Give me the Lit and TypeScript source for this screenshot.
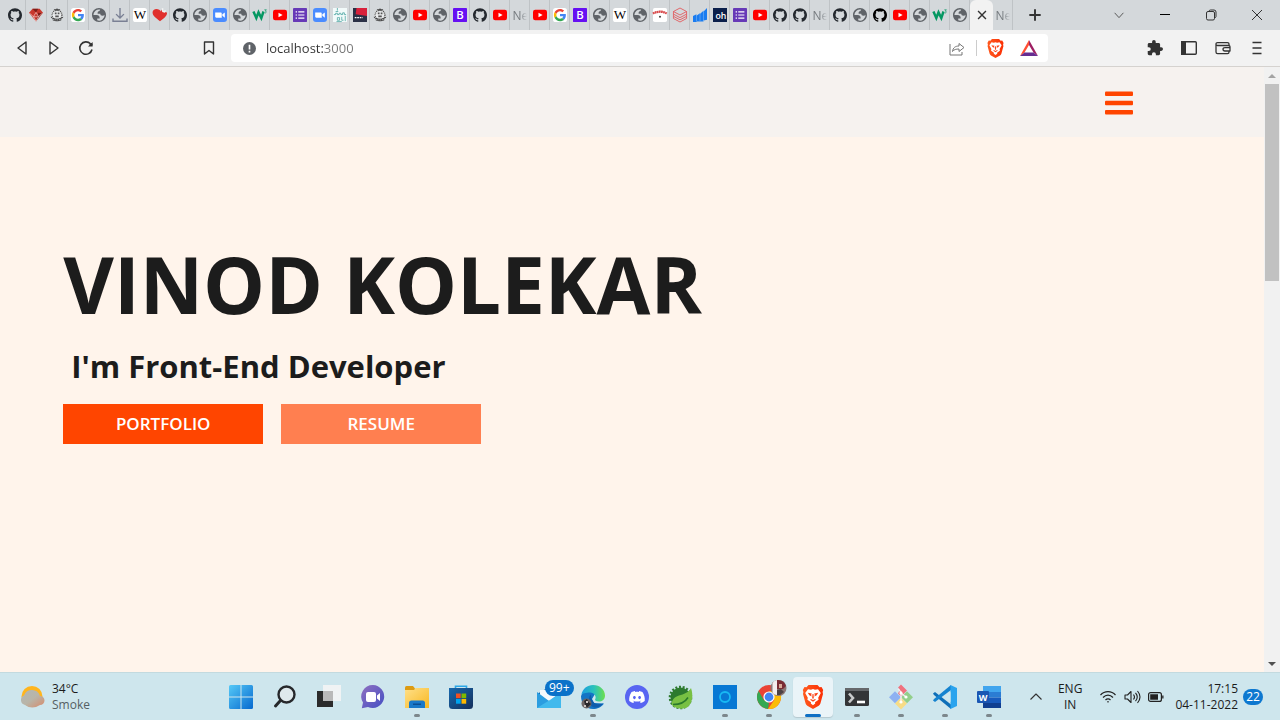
import { LitElement, html, svg, css } from "lit";
import { customElement } from "lit/decorators.js";
import { classMap } from "lit/directives/class-map.js";

const GITHUB =
  "M12 .297c-6.63 0-12 5.373-12 12 0 5.303 3.438 9.8 8.205 11.385.6.113.82-.258.82-.577 0-.285-.01-1.04-.015-2.04-3.338.724-4.042-1.61-4.042-1.61C4.422 18.07 3.633 17.7 3.633 17.7c-1.087-.744.084-.729.084-.729 1.205.084 1.838 1.236 1.838 1.236 1.07 1.835 2.809 1.305 3.495.998.108-.776.417-1.305.76-1.605-2.665-.3-5.466-1.332-5.466-5.93 0-1.31.465-2.38 1.235-3.22-.135-.303-.54-1.523.105-3.176 0 0 1.005-.322 3.3 1.23.96-.267 1.98-.399 3-.405 1.02.006 2.04.138 3 .405 2.28-1.552 3.285-1.23 3.285-1.23.645 1.653.24 2.873.12 3.176.765.84 1.23 1.91 1.23 3.22 0 4.61-2.805 5.625-5.475 5.92.42.36.81 1.096.81 2.22 0 1.606-.015 2.896-.015 3.286 0 .315.21.69.825.57C20.565 22.092 24 17.592 24 12.297c0-6.627-5.373-12-12-12";
const GLOBE =
  "M12 2C6.48 2 2 6.48 2 12s4.48 10 10 10 10-4.48 10-10S17.52 2 12 2zM4 12h4.400c3.407.022 4.922 1.730 4.543 5.127H9.488v2.470a8.004 8.004 0 0 0 10.498-8.083C19.327 12.504 18.332 13 17 13c-2.137 0-3.206-.916-3.206-2.750h-3.748c-.274-2.728.683-4.092 2.870-4.092 0-.975.327-1.597.811-1.970A8.004 8.004 0 0 0 4 12z";
const DISCORD =
  "M20.317 4.3698a19.7913 19.7913 0 00-4.8851-1.5152.0741.0741 0 00-.0785.0371c-.211.3753-.4447.8648-.6083 1.2495-1.8447-.2762-3.68-.2762-5.4868 0-.1636-.3933-.4058-.8742-.6177-1.2495a.077.077 0 00-.0785-.037 19.7363 19.7363 0 00-4.8852 1.515.0699.0699 0 00-.0321.0277C.5334 9.0458-.319 13.5799.0992 18.0578a.0824.0824 0 00.0312.0561c2.0528 1.5076 4.0413 2.4228 5.9929 3.0294a.0777.0777 0 00.0842-.0276c.4616-.6304.8731-1.2952 1.226-1.9942a.076.076 0 00-.0416-.1057c-.6528-.2476-1.2743-.5495-1.8722-.8923a.077.077 0 01-.0076-.1277c.1258-.0943.2517-.1923.3718-.2914a.0743.0743 0 01.0776-.0105c3.9278 1.7933 8.18 1.7933 12.0614 0a.0739.0739 0 01.0785.0095c.1202.099.246.1981.3728.2924a.077.077 0 01-.0066.1276 12.2986 12.2986 0 01-1.873.8914.0766.0766 0 00-.0407.1067c.3604.698.7719 1.3628 1.225 1.9932a.076.076 0 00.0842.0286c1.961-.6067 3.9495-1.5219 6.0023-3.0294a.077.077 0 00.0313-.0552c.5004-5.177-.8382-9.6739-3.5485-13.6604a.061.061 0 00-.0312-.0286zM8.02 15.3312c-1.1825 0-2.1569-1.0857-2.1569-2.419 0-1.3332.9555-2.4189 2.157-2.4189 1.2108 0 2.1757 1.0952 2.1568 2.419 0 1.3332-.9555 2.4189-2.1569 2.4189zm7.9748 0c-1.1825 0-2.1569-1.0857-2.1569-2.419 0-1.3332.9554-2.4189 2.1569-2.4189 1.2108 0 2.1757 1.0952 2.1568 2.419 0 1.3332-.946 2.4189-2.1568 2.4189Z";

/* Favicons, all on a 16 x 16 grid. */
const favicons: Record<string, unknown> = {
  github: svg`<path transform="scale(.6667)" fill="#24292f" d=${GITHUB} />`,
  githubBlack: svg`<path transform="scale(.6667)" fill="#000" d=${GITHUB} />`,
  globe: svg`<path transform="translate(-1.600 -1.600) scale(.8)" fill-rule="evenodd" fill="#5f6368" d=${GLOBE} />`,
  ruby: svg`
    <path fill="#c8372d" d="M4 .8h8.200L16 5.400 8 15.500 0 5.400z" />
    <path fill="#5d1210" d="M8 5l2.500-4.200H4z M10.500 5.500L15 6 8 15z" opacity=".7" />
    <path fill="none" stroke="#f3c9c4" stroke-width=".8" d="M1 6l4 4 3-5 3 5 4-4M5 10l3 5 3-5z" />`,
  emblem: svg`
    <circle cx="8" cy="8" r="6.500" fill="#e9ebec" />
    <circle cx="8" cy="8" r="5.600" fill="none" stroke="#555" stroke-width="1.600" stroke-dasharray="1.200 .9" />
    <path fill="none" stroke="#333" stroke-width="1" d="M1 10.500c4 3 10 3 14 0M3 13.500c3 1.500 7 1.500 10 0M8 .5v3M4.500 2l7 0" />
    <path fill="#555" d="M5.500 5h2v2h-2zM8.800 5h2v2h-2zM6 8.500h4v2H6z" />`,
  google: svg`
    <rect width="16" height="16" rx="3" fill="#fff" />
    <g transform="translate(1 1) scale(.2917)">
      <path fill="#EA4335" d="M24 9.500c3.540 0 6.710 1.220 9.210 3.600l6.850-6.850C35.900 2.380 30.470 0 24 0 14.620 0 6.510 5.380 2.560 13.220l7.980 6.190C12.430 13.720 17.740 9.500 24 9.500z" />
      <path fill="#4285F4" d="M46.980 24.550c0-1.570-.15-3.090-.38-4.550H24v9.020h12.940c-.58 2.960-2.260 5.480-4.780 7.180l7.730 6c4.510-4.180 7.090-10.360 7.090-17.650z" />
      <path fill="#FBBC05" d="M10.530 28.590c-.48-1.450-.76-2.990-.76-4.590s.27-3.140.76-4.590l-7.980-6.190C.92 16.460 0 20.120 0 24c0 3.880.92 7.540 2.560 10.780l7.970-6.190z" />
      <path fill="#34A853" d="M24 48c6.480 0 11.930-2.130 15.890-5.810l-7.730-6c-2.150 1.450-4.920 2.300-8.160 2.300-6.260 0-11.570-4.220-13.470-9.910l-7.980 6.190C6.510 42.620 14.620 48 24 48z" />
    </g>`,
  download: svg`<path fill="none" stroke="#7a8094" stroke-width="1.600" d="M8 0v11M3.500 7l4.500 4.500L12.500 7M0 12v3.200h16V12" />`,
  wiki: svg`<rect width="16" height="16" rx="3" fill="#fff" /><text x="8" y="13" text-anchor="middle" class="serif">W</text>`,
  heart: svg`
    <path fill="#e0302d" d="M8 15C3 11.500-.5 8.500-.5 5.200-.5 2.500 1.500 1 4 1 6 1 8.500 2 9 4l1-2 3 2.500 3 .5c.5 4-4 7-8 10z" />
    <path fill="#f4f4f4" d="M10 0l2 .5-.5 2.500L15 2.500l-1.500 3-3-1z" />`,
  zoom: svg`
    <rect width="16" height="16" rx="3.500" fill="#4a8cff" />
    <path fill="#fff" d="M2.500 5h6.200c.8 0 1.300.5 1.300 1.300V11H3.800c-.8 0-1.300-.5-1.300-1.300zM10.700 7.200L13.500 5v6l-2.800-2.200z" />`,
  w3: svg`
    <path fill="none" stroke="#059862" stroke-width="2.800" d="M.5 4l3.300 7.500L6.300 5l3.200 6.500L12 4" />
    <path fill="none" stroke="#059862" stroke-width=".8" d="M13 2h2.300l-1.300 1.500c1.800 0 1.500 2.500-.6 2.200" />`,
  youtube: svg`<rect y="2" width="16" height="12" rx="2.500" fill="#f00" /><path fill="#fff" d="M6.300 5.300v5.400L11 8z" />`,
  forms: svg`
    <rect width="16" height="16" rx="1" fill="#673ab7" />
    <path stroke="#fff" stroke-width="1.400" d="M6 4.500h7M6 8h7M6 11.500h7M3 4.500h1.600M3 8h1.600M3 11.500h1.600" />`,
  teal: svg`
    <rect width="16" height="16" fill="#f2fafa" />
    <path fill="none" stroke="#3a9c98" stroke-width=".8" d="M5 0v3M3 4h3M1 7.500h2V6h2v1.500h2V6h2v1.500h2V5.500h2v2h2M5 11h2.500v3H5v-3M10 10v4h2M14 9v6M4 15.500h6" />`,
  news: svg`
    <rect width="16" height="16" fill="#2a3046" />
    <path fill="#d8213b" d="M4 0h12v9L3 7z" />
    <path stroke="#fff" stroke-width="1.200" stroke-dasharray="2 .8" d="M2 11h9" />`,
  bootstrap: svg`<rect width="16" height="16" rx="1" fill="#6610f2" /><text x="8" y="13" text-anchor="middle" class="letter">B</text>`,
  arc: svg`
    <rect width="16" height="16" rx="2" fill="#fff" />
    <path fill="none" stroke="#d8484a" stroke-width="2.600" stroke-dasharray="2 .4" d="M0 6.500c4-3 12-3 16 0" />
    <circle cx="8" cy="10" r="1.200" fill="#444" />`,
  stack: svg`
    <path fill="none" stroke="#e2585c" stroke-width="1" d="M8 0l7.500 4L8 8 .5 4zM.5 4v3L8 11l7.500-4V4M.5 7v2.500l7.500 4 7.500-4V7M.5 9.500V12L8 16l7.500-4V9.500" />`,
  bars: svg`<path fill="#1a7cf0" d="M0 9l4-2v9H0zM3.500 9l4.500-3v9.500H3.500zM7.500 7l4.500-4v12.500H7.500zM11 5l5-5v13.500l-5 1z" /><path fill="none" stroke="#9cc8f5" stroke-width=".5" d="M4 7v8M8 6v9M12 3v12" />`,
  oh: svg`<rect width="16" height="16" fill="#0b1f4b" /><text x="9" y="12" text-anchor="middle" class="tiny">oh</text>`,
};

const tabs =
  "github ruby emblem google globe download wiki heart github globe zoom globe w3 youtube forms zoom teal news emblem globe youtube globe bootstrap github youtube Ne youtube google bootstrap globe wiki globe arc stack bars oh forms youtube github github Ne github globe githubBlack youtube globe w3 globe active Ne".split(
    " "
  );

const line = (d: string, size = 16, w = 1.4, color = "#333") => html`
  <svg width=${size} height=${size} viewBox="0 0 16 16" fill="none" stroke=${color} stroke-width=${w} stroke-linejoin="round" aria-hidden="true">
    <path d=${d} />
  </svg>`;

const lion = (w: number, h: number) => html`
  <svg width=${w} height=${h} viewBox="0 0 20 24" aria-hidden="true">
    <defs><linearGradient id="lion"><stop stop-color="#ff5a1f" /><stop offset="1" stop-color="#fb2f04" /></linearGradient></defs>
    <path fill="url(#lion)" d="M5.500 0h9l2 2.200 2-.2 1.700 3-.6 2 .4 2-2.600 9.500c-.3 1-1 1.700-1.700 2.200L10 24l-5.700-3.300c-.7-.5-1.400-1.200-1.700-2.200L0 9l.4-2L-.2 5l1.700-3 2 .2z" />
    <path fill="#fff" d="M5 4.200l3 .5 2-.6 2 .6 3-.5L17.800 8l-2.600 4.700.4 2-3.600 2.600.2 1.200L10 20.300l-2.200-1.800.2-1.200-3.600-2.600.4-2L2.200 8z" />
    <path fill="#fb4318" d="M4.800 7.800l4 .6-.6 1.400.4 1.700-2.300-1.300zM15.200 7.800l-4 .6.6 1.400-.4 1.700 2.300-1.300zM9.500 9h1l.3 4L10 14l-.8-1zM6.800 14.600l2-.3 1.200.9 1.200-.9 2 .3L10 16.800z" />
  </svg>`;

/* Taskbar artwork, on a 24 x 24 grid. */
const apps: { name: string; art?: unknown; run?: boolean; active?: boolean; badge?: string }[] = [
  {
    name: "Start",
    art: svg`
      <linearGradient id="win" x2="1" y2="1"><stop stop-color="#55c9f7" /><stop offset="1" stop-color="#0669cf" /></linearGradient>
      <path fill="url(#win)" d="M1.500 0H11.500V11.500H0V1.500A1.500 1.500 0 0 1 1.500 0zM12.500 0H22.500A1.500 1.500 0 0 1 24 1.500V11.500H12.500zM0 12.500H11.500V24H1.500A1.500 1.500 0 0 1 0 22.500zM12.500 12.500H24V22.500A1.500 1.500 0 0 1 22.500 24H12.500z" />`,
  },
  {
    name: "Search",
    art: svg`<circle cx="13.500" cy="9.500" r="8" fill="#dfe9ec" stroke="#26282b" stroke-width="2.400" /><path stroke="#26282b" stroke-width="3" stroke-linecap="round" d="M7.500 15.500L2.500 21" />`,
  },
  {
    name: "Task view",
    art: svg`<path fill="#2b2b2b" d="M0 6h16v16H0z" /><path fill="#f4f4f4" d="M6 0h18v16H6z" opacity=".9" /><path fill="#b9b9b9" d="M6 6h10v10H6z" />`,
  },
  {
    name: "Chat",
    art: svg`
      <linearGradient id="chat" x2="1" y2="1"><stop stop-color="#8f6fc0" /><stop offset="1" stop-color="#4550c4" /></linearGradient>
      <path fill="url(#chat)" d="M12 0a11.500 11.500 0 1 1-5 22L.8 23.200 2 17.500A11.500 11.500 0 0 1 12 0z" />
      <rect x="5" y="7" width="10" height="10" rx="2" fill="#fff" /><path fill="#fff" d="M16 10.500L19 8v8l-3-2.500z" />`,
  },
  {
    name: "File Explorer",
    run: true,
    art: svg`
      <linearGradient id="folder" x2="1" y2="1"><stop stop-color="#ffe08a" /><stop offset="1" stop-color="#f8b821" /></linearGradient>
      <path fill="#dd9b12" d="M0 2.500Q0 1 1.500 1H8l2 2.500V7H0z" /><path fill="url(#folder)" d="M0 5h9l1.500-2H24v20H0z" />
      <path fill="#1979c9" d="M4 23v-5q0-2.500 2.500-2.500h11q2.500 0 2.500 2.500v5z" /><path fill="#0b4f93" d="M8 18.500h8V20H8z" />`,
  },
  {
    name: "Microsoft Store",
    art: svg`
      <linearGradient id="store" x2="1" y2="1"><stop stop-color="#1769ae" /><stop offset="1" stop-color="#142f5b" /></linearGradient>
      <path fill="none" stroke="#2ba7e8" stroke-width="1.600" d="M6.500 5V1.200h11V5" /><path fill="url(#store)" d="M0 3h24v17.500q0 3.500-3.500 3.500h-17Q0 24 0 20.500z" />
      <path fill="#f25022" d="M7 8.500h4.700v4.700H7z" /><path fill="#7fba00" d="M12.500 8.500h4.700v4.700h-4.700z" /><path fill="#00a4ef" d="M7 14h4.700v4.700H7z" /><path fill="#ffb900" d="M12.500 14h4.700v4.700h-4.700z" />`,
  },
  { name: "" },
  {
    name: "Mail",
    badge: "99+",
    art: svg`
      <path fill="#1263ac" d="M0 9l12-7 12 7v5H0z" /><path fill="#f5f9fc" d="M3 5h18v10H3z" /><path fill="#2b9de0" d="M0 7l12 9 12-9v16H0z" /><path fill="#4cc4f2" d="M0 23L24 8v15z" opacity=".7" />`,
  },
  {
    name: "Microsoft Edge",
    run: true,
    art: svg`
      <linearGradient id="edge" x2="1"><stop stop-color="#1b9de2" /><stop offset=".55" stop-color="#2cc3b8" /><stop offset="1" stop-color="#6ddf4c" /></linearGradient>
      <path fill="#1374c5" d="M0 11a12 12 0 0 1 8-7l6 5-3 5 2 4 10 .5C20 22.500 16.500 24 12 24 5 24 0 18.500 0 11z" />
      <path fill="url(#edge)" d="M.3 10C1.500 3.500 6.500 0 12 0c7 0 12 5 12 10.500 0 4-3 6-6 6s-4.500-1-3.800-2.200C15.800 12 13.500 7.500 9 7.500c-4 0-8 1-8.700 2.500z" />
      <path fill="#0f5cab" d="M9.500 9.500C7 13 7.500 20 12 22c4 1.500 8-.5 10-3.500-3 1.500-8 1-10-2s-1.500-5-2.500-7z" />
      <circle cx="5.500" cy="18.500" r="5" fill="#6d6666" /><path fill="#29282b" d="M3 16l3-2 1.500 3L10 19l-4 3.500-2-3z" /><path fill="#cfc6c3" d="M5 16h2v2H5zM3 20h2v2H3z" />`,
  },
  {
    name: "Discord",
    art: svg`<circle cx="12" cy="12" r="12" fill="#5865f2" /><path transform="translate(4.200 4.200) scale(.65)" fill="#fff" d=${DISCORD} />`,
  },
  {
    name: "Spring Tool Suite",
    art: svg`
      <circle cx="11.500" cy="12.500" r="10" fill="#2d7a2e" /><circle cx="11.500" cy="12.500" r="10.600" fill="none" stroke="#2d7a2e" stroke-width="2.400" stroke-dasharray="2 1.700" />
      <path fill="#78c043" d="M22 3c2.500 7 1.500 16-4 19.500C13 25 5 23 3 20c-1-4 2-8 7-9.500S19 8 22 3z" /><path fill="none" stroke="#2a7a2b" stroke-width="1.500" d="M4 19.500c6 0 12-2 15-7" />`,
  },
  {
    name: "Cortana",
    run: true,
    art: svg`<path fill="#0878d4" d="M0 0h24v24H0z" /><circle cx="12" cy="12" r="5" fill="none" stroke="#18b9f3" stroke-width="1.800" />`,
  },
  {
    name: "Google Chrome",
    run: true,
    art: svg`
      <circle cx="12" cy="12" r="12" fill="#ea4335" /><path fill="#34a853" d="M1.600 6l5.200 9L12 18l-1 6A12 12 0 0 1 1.600 6z" /><path fill="#fbbc05" d="M12 6h10.400A12 12 0 0 1 11 24l6.200-9z" />
      <circle cx="12" cy="12" r="5.600" fill="#fff" /><circle cx="12" cy="12" r="4.400" fill="#4285f4" />
      <circle cx="21.500" cy="3" r="8" fill="#8d7774" /><path fill="#f2eeee" d="M15.500-2Q17-4.500 20-5v15q-3 0-4.500-2z" /><path fill="#7a2c34" d="M20-5q7-.5 9 6l-3 3h-6z" /><path fill="#d9aa98" d="M22-1h3v4h-3z" /><path fill="#4d4344" d="M20 5l4-1 3 3-4 3h-3z" />`,
  },
  { name: "Brave", run: true, active: true },
  {
    name: "Terminal",
    run: true,
    art: svg`
      <rect y="3" width="24" height="18" rx="1.500" fill="#333537" /><path fill="#65686b" d="M0 3h24v3H0z" />
      <path fill="none" stroke="#c8cacb" stroke-width="2.600" d="M4 8.500l4 4.500-4 4.500" /><path stroke="#fff" stroke-width="2.600" d="M12 17h8" />`,
  },
  {
    name: "Git",
    run: true,
    art: svg`
      <path fill="#f0727f" d="M12-.5l6 6-6 6-3-3 2-4-2-2z" /><path fill="#8db1f2" d="M6 6.200l6 6-6 6-6-6z" /><path fill="#93cf8b" d="M18 6.200l6 6-6 6-6-6z" /><path fill="#f7dc86" d="M12 12.500l6 6-6 6-6-6z" />
      <path fill="none" stroke="#f7ecee" stroke-width="1.400" d="M9 4l3 3v11M12 8l5 4" /><circle cx="12" cy="8" r="1.600" fill="#fff" /><circle cx="12" cy="17" r="1.600" fill="#fff" /><circle cx="17" cy="12" r="1.600" fill="#fff" />`,
  },
  {
    name: "Visual Studio Code",
    run: true,
    art: svg`
      <path fill="#0e6fb8" d="M0 8.500L2 7l16 12.500V24L1 10z" /><path fill="#1583cf" d="M0 15.500L2 17 18 5V0L1 14z" /><path fill="#2ba4ee" d="M17.500 0L24 3v18l-6.500 3z" /><path fill="#d0e8ee" d="M17.500 7v10L11 12z" />`,
  },
  {
    name: "Word",
    run: true,
    art: svg`
      <path fill="#41a5ee" d="M6 1h18v6H6z" /><path fill="#2b7cd3" d="M6 7h18v5.500H6z" /><path fill="#185abd" d="M6 12.500h18V18H6z" /><path fill="#103f91" d="M6 18h18v5H6z" />
      <rect y="6" width="12" height="12" rx="1" fill="#1b57b3" /><text x="6" y="15.500" text-anchor="middle" class="word">W</text>`,
  },
];

@customElement("browser-chrome")
class BrowserChrome extends LitElement {
  static styles = css`
    :host { display: block; font-family: "Open Sans", "Noto Sans", sans-serif; }
    button { border: 0; padding: 0; background: none; display: grid; place-items: center; font: inherit; color: inherit; }
    svg { display: block; overflow: visible; }
    .strip { display: flex; align-items: stretch; height: 30px; padding-left: 5px; background: #d4d8db; }
    .tabs { display: flex; }
    .tab { flex: none; width: 20px; border-right: 1px solid #bfc3c6; }
    .tab:nth-child(-n + 5) { width: 21px; }
    .favicon { width: 14px; height: 14px; }
    .title { width: 14px; font-size: 12px; color: #777c80; text-align: left;
      -webkit-mask-image: linear-gradient(90deg, #000 50%, transparent); mask-image: linear-gradient(90deg, #000 50%, transparent); }
    .tab.active { width: 23px; background: #f2f2f2; border: 0; border-radius: 6px 6px 0 0; }
    .new { width: 44px; }
    .window { display: flex; margin-left: auto; }
    .window button { width: 46px; }
    .bar { display: flex; align-items: center; height: 36px; background: #f2f2f2; border-bottom: 1px solid #d5d2cf; padding: 0 6px; }
    .bar > button { width: 32px; height: 32px; }
    .bookmark { margin-left: 91px; }
    .address { flex: 1; display: flex; align-items: center; height: 28px; margin: 0 90px 0 6px; padding: 0 10px 0 12px; background: #fff; border-radius: 4px; }
    .address input { flex: 1; min-width: 0; border: 0; outline: 0; margin-left: 10px; padding: 0; font: 13px/20px "Open Sans", sans-serif;
      color: transparent; background: linear-gradient(90deg, #333 58px, #777 58px); -webkit-background-clip: text; background-clip: text; }
    .rule { width: 1px; height: 16px; margin: 0 10px 0 11px; background: #ccc; }
    .rewards { margin-left: 16px; }
    .bar > .tool { width: 34px; }
    .serif { font: 15px "Liberation Serif", serif; fill: #000; }
    .letter { font: 600 13px "Open Sans", sans-serif; fill: #fff; }
    .tiny { font: 600 10px "Open Sans", sans-serif; fill: #fff; }
  `;

  render() {
    return html`
      <div class="strip">
        <div class="tabs">
          ${tabs.map((t) => {
            if (t === "active")
              return html`<button class="tab active" aria-label="Close tab">${line("M3.500 3.500l9 9M12.500 3.500l-9 9", 14, 1.6)}</button>`;
            if (t === "Ne") return html`<button class="tab"><span class="title">Ne</span></button>`;
            return html`<button class="tab" aria-label=${t}><svg class="favicon" viewBox="0 0 16 16">${favicons[t]}</svg></button>`;
          })}
        </div>
        <button class="new" aria-label="New tab">${line("M8 1.500v13M1.500 8h13", 14, 2.2)}</button>
        <div class="window">
          <button aria-label="Tab search">${line("M3 5.500l5 5.500 5-5.500", 14, 1.1, "#555")}</button>
          <button aria-label="Minimize">${line("M3 7.500h10", 16, 1, "#000")}</button>
          <button aria-label="Restore">${line("M3.500 6q0-1.500 1.500-1.500h5q1.500 0 1.500 1.500v5.500q0 1.500-1.500 1.500h-5q-1.500 0-1.500-1.500zM6 4.500Q6 3 7.500 3H11q2 0 2 2v4.500q0 1-1.500 1.500", 16, 1)}</button>
          <button aria-label="Close">${line("M3 3l10 10M13 3L3 13", 16, 1)}</button>
        </div>
      </div>
      <div class="bar">
        <button aria-label="Back">${line("M12 2v12L4 8z")}</button>
        <button aria-label="Forward">${line("M4 2v12l8-6z")}</button>
        <button aria-label="Reload">
          <svg width="16" height="16" viewBox="0 0 16 16" fill="none" stroke="#333" stroke-width="1.600">
            <path d="M14 9.500A6.200 6.200 0 1 1 12.500 3.800" /><path fill="#333" stroke="none" d="M10 6.500L14.600 2v4.500z" /><circle cx="13" cy="4.500" r="1.500" fill="#333" stroke="none" />
          </svg>
        </button>
        <button class="bookmark" aria-label="Bookmark">${line("M3.500 2h9v12L8 10.500 3.500 14z")}</button>
        <div class="address">
          <svg width="13" height="13" viewBox="0 0 14 14"><circle cx="7" cy="7" r="7" fill="#5f6368" /><path stroke="#fff" stroke-width="1.800" d="M7 3v5M7 9.500v1.800" /></svg>
          <input type="text" value="localhost:3000" aria-label="Address" />
          <button aria-label="Share">${line("M1 4v11h12v-3M3.500 11.500c.5-4 3-5.500 6.500-5.500V3.500L15 7.500l-5 4V9c-3 0-5 .5-6.500 2.500z", 16, 1, "#777")}</button>
          <span class="rule"></span>
          <button aria-label="Brave Shields">${lion(17, 19)}</button>
          <button class="rewards" aria-label="Brave Rewards">
            <svg width="18" height="16" viewBox="0 0 18 16"><path fill="#ff4f35" d="M9 0v5L4.500 12.500 0 16z" /><path fill="#9e1f63" d="M9 0l9 16-4.500-3.500L9 5z" /><path fill="#662d91" d="M0 16l4.500-3.500h9L18 16z" /></svg>
          </button>
        </div>
        <button class="tool" aria-label="Extensions">
          <svg width="16" height="16" viewBox="1 1 22 22"><path fill="#333" d="M20.500 11H19V7c0-1.100-.9-2-2-2h-4V3.500a2.500 2.500 0 0 0-5 0V5H4c-1.100 0-2 .9-2 2v3.800h1.500a2.700 2.700 0 0 1 0 5.400H2V20c0 1.100.9 2 2 2h3.800v-1.500a2.700 2.700 0 0 1 5.400 0V22H17c1.100 0 2-.9 2-2v-4h1.500a2.500 2.500 0 0 0 0-5z" /></svg>
        </button>
        <button class="tool" aria-label="Sidebar">
          <svg width="16" height="14" viewBox="0 0 16 14"><rect x=".7" y=".7" width="14.600" height="12.600" rx="1" fill="none" stroke="#333" stroke-width="1.400" /><path fill="#333" d="M0 0h5v14H0z" /></svg>
        </button>
        <button class="tool" aria-label="Wallet">${line("M14 5.500V4q0-1.300-1.500-1.300H2.500Q1 2.700 1 4v8q0 1.600 1.600 1.600h10q1.400 0 1.400-1.600v-1M1 4.500q.3 1 1.500 1h11q1.500 0 1.500 1.200V11h-5q-2 0-2-1.700t2-1.700h5", 16, 1.3)}</button>
        <button class="tool" aria-label="Menu">${line("M3.500 2.500h9M3.500 8h9M3.500 13.500h9", 16, 1.4)}</button>
      </div>`;
  }
}

@customElement("portfolio-page")
class PortfolioPage extends LitElement {
  static styles = css`
    :host { display: flex; min-height: 0; font-family: "Open Sans", "Noto Sans", sans-serif; color: #1c1c1c; }
    .page { flex: 1; display: flex; flex-direction: column; background: #fff4eb; }
    .nav { display: flex; justify-content: flex-end; align-items: center; height: 70px; padding: 2px 10% 0 0; box-sizing: border-box; background: #f6f2ef; }
    .menu { margin-right: 5px; padding: 0; border: 0; background: none; }
    .menu svg { display: block; }
    .hero { flex: 1; padding: 93px 5% 0; }
    h1 { margin: 0; font-size: 78px; line-height: 108px; font-weight: 700; }
    h2 { margin: 6px 0 16px 8px; font-size: 31px; line-height: 44px; font-weight: 700; }
    .actions { display: flex; gap: 18px; }
    .actions a { width: 200px; line-height: 40px; text-align: center; text-decoration: none; color: #fff; font-size: 17px; font-weight: 600; background: #ff4500; }
    .actions .soft { background: #ff7f50; }
    .scroll { display: flex; flex-direction: column; width: 16px; background: #f1f1f1; }
    .scroll button { height: 17px; padding: 0; border: 0; background: none; display: grid; place-items: center; }
    .track { flex: 1; }
    .thumb { height: 34.5%; margin: 0 1px; background: #c1c1c1; }
  `;

  render() {
    return html`
      <main class="page">
        <nav class="nav">
          <button class="menu" aria-label="Menu">
            <svg width="28" height="24" viewBox="0 0 28 24" fill="#ff4500"><rect y=".5" width="28" height="4.600" rx="1" /><rect y="9.700" width="28" height="4.600" rx="1" /><rect y="18.900" width="28" height="4.600" rx="1" /></svg>
          </button>
        </nav>
        <section class="hero">
          <h1>VINOD KOLEKAR</h1>
          <h2>I'm Front-End Developer</h2>
          <div class="actions"><a href="#portfolio">PORTFOLIO</a><a class="soft" href="#resume">RESUME</a></div>
        </section>
      </main>
      <div class="scroll">
        <button aria-label="Scroll up"><svg width="8" height="4" viewBox="0 0 8 4"><path fill="#a3a3a3" d="M0 4l4-4 4 4z" /></svg></button>
        <div class="track"><div class="thumb"></div></div>
        <button aria-label="Scroll down"><svg width="8" height="4" viewBox="0 0 8 4"><path fill="#505050" d="M0 0l4 4 4-4z" /></svg></button>
      </div>`;
  }
}

@customElement("task-bar")
class TaskBar extends LitElement {
  static styles = css`
    :host { display: flex; align-items: center; height: 47px; background: #cee6ed; border-top: 1px solid #c3dadf;
      font: 12px/16px "Open Sans", "Noto Sans", sans-serif; color: #1b1b1b; }
    button { border: 0; padding: 0; background: none; font: inherit; color: inherit; }
    svg { display: block; overflow: visible; }
    .weather { display: flex; align-items: center; gap: 8px; width: 219px; padding-left: 20px; text-align: left; }
    .muted { color: #555f63; }
    .weather span, .stack span { display: block; }
    .apps { display: flex; gap: 4px; padding: 0 2px; }
    .app { position: relative; width: 40px; height: 40px; display: grid; place-items: center; border-radius: 4px; }
    .active { background: #eaf4f8; box-shadow: 0 1px 1px #b5c8cf; }
    .run::after { content: ""; position: absolute; bottom: 0; left: 17px; width: 6px; height: 3px; border-radius: 2px; background: #7c878c; }
    .active::after { left: 12px; width: 16px; background: #0d6fc4; }
    .badge { position: absolute; top: 3px; left: 16px; padding: 0 4px; border-radius: 8px; background: #0b72c9; color: #fff; }
    .word { font: 700 9px "Open Sans", sans-serif; fill: #fff; }
    .tray { display: flex; align-items: center; margin-left: auto; padding-right: 17px; }
    .stack { text-align: center; margin: 0 18px 0 14px; }
    .status { display: flex; gap: 8px; align-items: center; }
    .clock { text-align: right; margin: 0 5px 0 11px; }
    .count { width: 20px; border-radius: 8px; background: #0d78d0; color: #fff; text-align: center; }
  `;

  render() {
    return html`
      <button class="weather">
        <svg width="24" height="24" viewBox="0 0 24 24">
          <defs><linearGradient id="haze" x2="1" y2="1"><stop stop-color="#b3b7b4" /><stop offset=".5" stop-color="#b9b5a8" /><stop offset="1" stop-color="#d98a6a" /></linearGradient></defs>
          <circle cx="12" cy="11.500" r="10.500" fill="#ffb51e" /><path fill="url(#haze)" d="M5 20a5 5 0 0 1-1-9.500A8.500 8.500 0 0 1 20 11a4.500 4.500 0 0 1 0 9q-8 5-15 0z" />
        </svg>
        <span><span>34°C</span><span class="muted">Smoke</span></span>
      </button>
      <div class="apps">
        ${apps.map((a) =>
          a.name
            ? html`<button class=${classMap({ app: true, run: !!a.run, active: !!a.active })} aria-label=${a.name}>
                ${a.active ? lion(20, 24) : html`<svg width="24" height="24" viewBox="0 0 24 24">${a.art}</svg>`}
                ${a.badge ? html`<span class="badge">${a.badge}</span>` : ""}
              </button>`
            : html`<span class="app"></span>`
        )}
      </div>
      <div class="tray">
        <button aria-label="Show hidden icons">${line("M2.500 10.500L8 5l5.500 5.500", 16, 1.1)}</button>
        <button class="stack"><span>ENG</span><span>IN</span></button>
        <button class="status" aria-label="Network, volume and battery">
          ${line("M.5 6c4-4.500 11-4.500 15 0M3 8.500c3-3.300 7-3.300 10 0M5.500 11c1.500-1.600 3.500-1.600 5 0M8 12v1.600", 16, 1.2, "#222")}
          ${line("M1 6v4h2.500L7 13.500v-11L3.500 6zM9.500 5.500q2 2.500 0 5M11.500 3.800q3.500 4.200 0 8.400M13.500 2q5 6 0 12", 16, 1.1, "#222")}
          <svg width="16" height="10" viewBox="0 0 16 10"><rect x=".6" y=".6" width="12.800" height="8.800" rx="2" fill="none" stroke="#222" stroke-width="1.200" /><path fill="#222" d="M2.200 2.200h7.800v5.600H2.200zM14.200 3.500h1.300v3h-1.300z" /></svg>
        </button>
        <button class="stack clock"><span>17:15</span><span>04-11-2022</span></button>
        <span class="count">22</span>
      </div>`;
  }
}

@customElement("app-root")
class AppRoot extends LitElement {
  static styles = css`
    :host { display: flex; flex-direction: column; min-height: 100vh; }
    .grow { flex: 1; }
  `;

  render() {
    return html`<browser-chrome></browser-chrome><portfolio-page class="grow"></portfolio-page><task-bar></task-bar>`;
  }
}
